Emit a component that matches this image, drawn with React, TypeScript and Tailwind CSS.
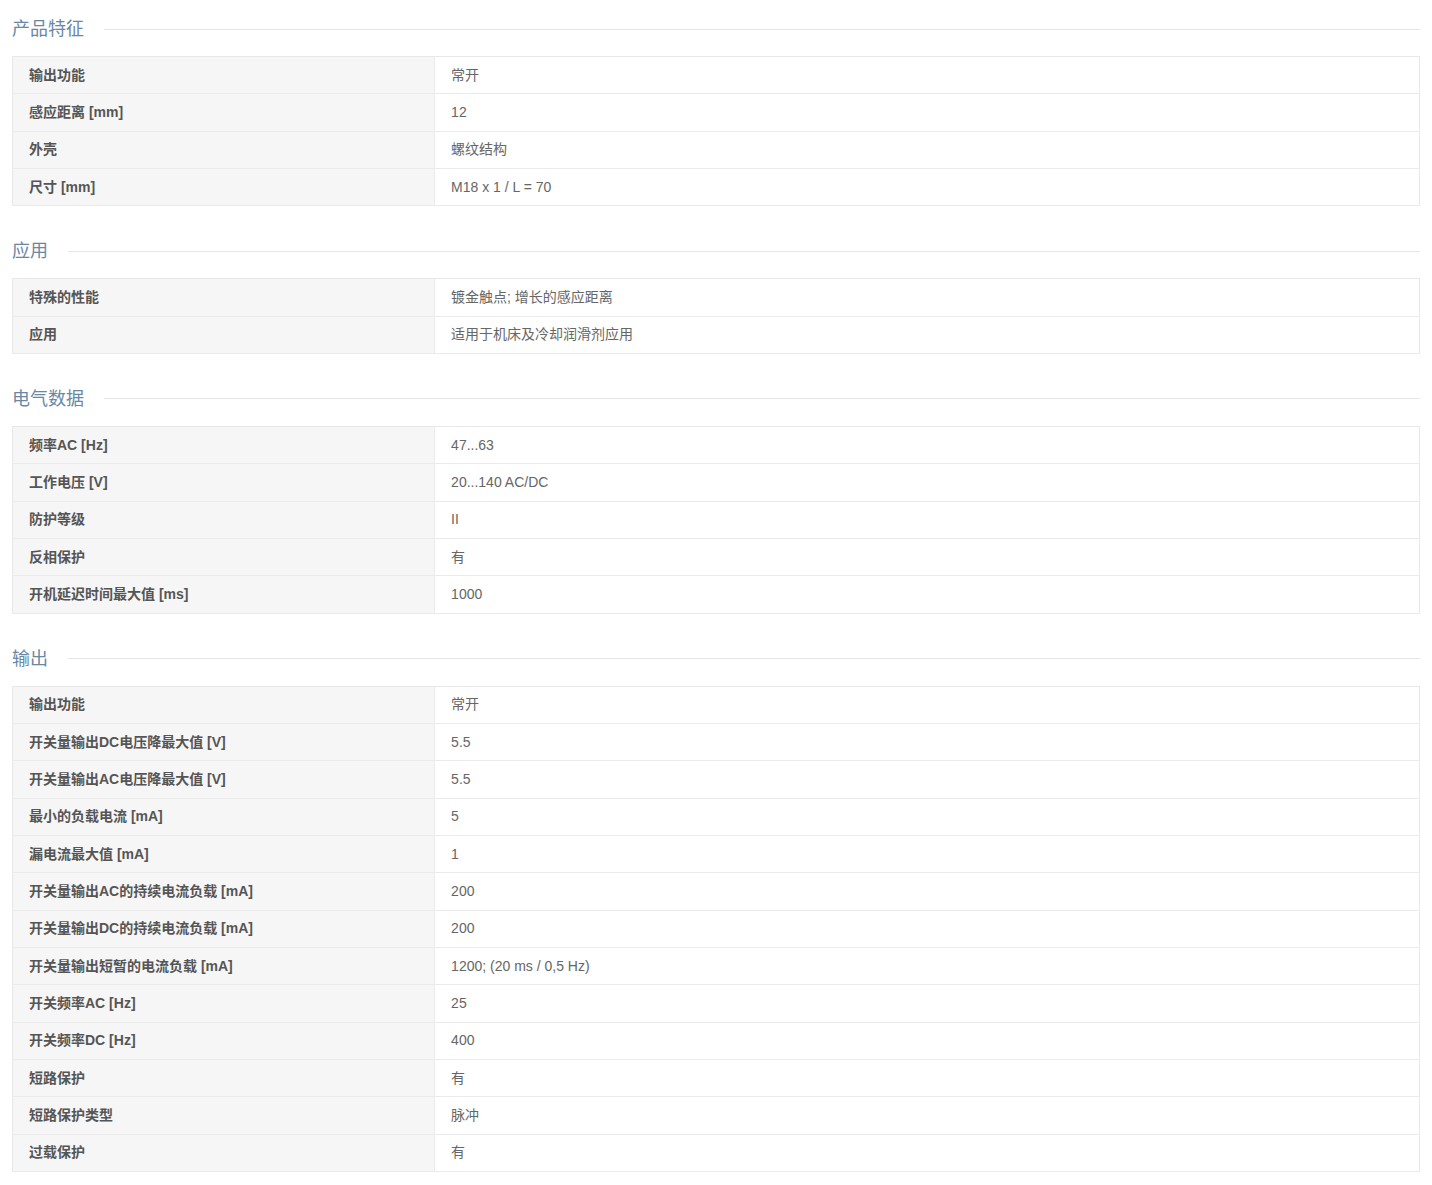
const sections: { title: string; rows: [string, string][] }[] = [
  {
    title: "产品特征",
    rows: [
      ["输出功能", "常开"],
      ["感应距离 [mm]", "12"],
      ["外壳", "螺纹结构"],
      ["尺寸 [mm]", "M18 x 1 / L = 70"],
    ],
  },
  {
    title: "应用",
    rows: [
      ["特殊的性能", "镀金触点; 增长的感应距离"],
      ["应用", "适用于机床及冷却润滑剂应用"],
    ],
  },
  {
    title: "电气数据",
    rows: [
      ["频率AC [Hz]", "47...63"],
      ["工作电压 [V]", "20...140 AC/DC"],
      ["防护等级", "II"],
      ["反相保护", "有"],
      ["开机延迟时间最大值 [ms]", "1000"],
    ],
  },
  {
    title: "输出",
    rows: [
      ["输出功能", "常开"],
      ["开关量输出DC电压降最大值 [V]", "5.5"],
      ["开关量输出AC电压降最大值 [V]", "5.5"],
      ["最小的负载电流 [mA]", "5"],
      ["漏电流最大值 [mA]", "1"],
      ["开关量输出AC的持续电流负载 [mA]", "200"],
      ["开关量输出DC的持续电流负载 [mA]", "200"],
      ["开关量输出短暂的电流负载 [mA]", "1200; (20 ms / 0,5 Hz)"],
      ["开关频率AC [Hz]", "25"],
      ["开关频率DC [Hz]", "400"],
      ["短路保护", "有"],
      ["短路保护类型", "脉冲"],
      ["过载保护", "有"],
    ],
  },
];

export default function App() {
  return (
    <div
      className="min-h-[1185px] bg-white px-3 pt-[10px]"
      style={{ fontFamily: '"Liberation Sans", Arial, "Noto Sans CJK SC", sans-serif' }}
    >
      {sections.map((s, i) => (
        <section key={i} className={i > 0 ? "mt-[26px]" : ""}>
          <div className="mb-[10px] flex h-9 items-center gap-5">
            <h2 className="pt-[3px] text-[18px] font-normal text-[#6a87a3]">{s.title}</h2>
            <div className="mt-[2px] h-px flex-1 bg-[#e6e6e6]" />
          </div>
          <table className="w-full table-fixed border-collapse border border-[#e8e8e8] text-[14px]">
            <tbody>
              {s.rows.map(([k, v], j) => (
                <tr key={j} className="h-[37.33px] border-b border-[#ebebeb]">
                  <td className="w-[30%] border-r border-[#ebebeb] bg-[#f6f6f6] px-4 py-0 font-bold text-[#555]">{k}</td>
                  <td className="px-4 py-0 text-[#666]">{v}</td>
                </tr>
              ))}
            </tbody>
          </table>
        </section>
      ))}
    </div>
  );
}
